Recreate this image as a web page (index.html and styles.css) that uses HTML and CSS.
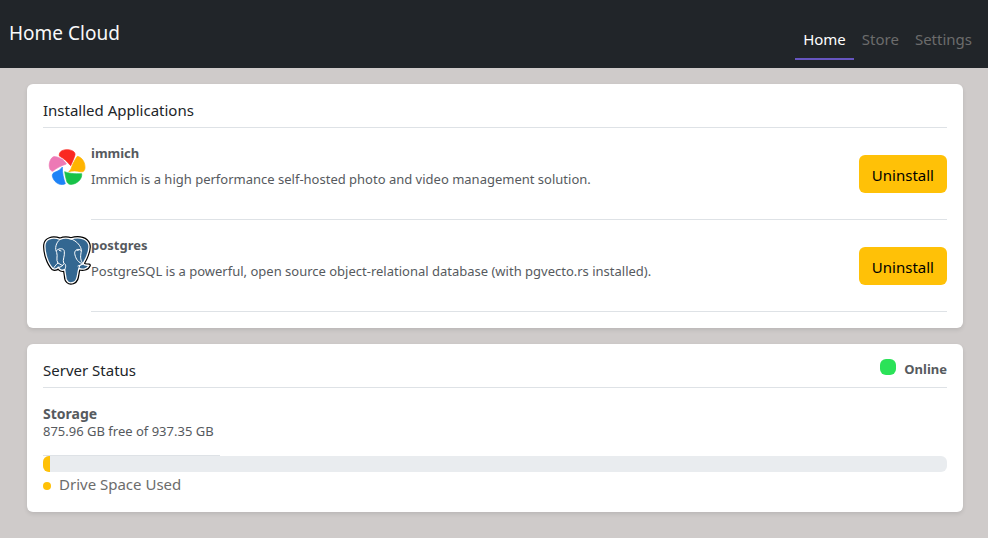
FILE: index.html
```html
<!DOCTYPE html>
<html lang="en">
<head>
<meta charset="utf-8">
<title>Home Cloud</title>
<link rel="stylesheet" href="styles.css">
</head>
<body>
<header class="topbar">
  <a class="brand" href="#">Home Cloud</a>
  <nav class="nav">
    <a class="nav-link active" href="#" aria-current="page">Home</a>
    <a class="nav-link" href="#">Store</a>
    <a class="nav-link" href="#">Settings</a>
  </nav>
</header>
<main class="content">
  <section class="card">
    <div class="card-head"><h2 class="card-title">Installed Applications</h2></div>
    <article class="app">
      <svg class="app-icon" viewBox="0 0 144 144" aria-hidden="true">
        <g stroke-width="2" stroke-linejoin="round">
          <path fill="#fa2921" stroke="#fa2921" d="M83 65C74 54 62 43 49 36C47 23 58 17 72 17C87 17 98 24 96 33C93 44 88 54 83 65Z"/>
          <path fill="#ffb400" stroke="#ffb400" d="M86 69C90 57 97 46 103 37C118 40 127 56 126 72C125 82 119 85 111 83C100 80 89 80 77 83C83 79 84 75 86 69Z"/>
          <path fill="#18c249" stroke="#18c249" d="M65 83C76 88 94 90 116 89C118 103 106 116 92 120C81 123 73 120 71 111C68 101 66 92 65 83Z"/>
          <path fill="#1e83f7" stroke="#1e83f7" d="M58 69C58 86 61 103 67 119C55 125 41 120 33 108C26 97 26 89 35 85C45 81 53 77 58 69Z"/>
          <path fill="#ed79b5" stroke="#ed79b5" d="M37 38C52 40 65 49 70 60C54 65 41 72 29 82C19 80 16 64 21 51C25 42 29 37 37 38Z"/>
        </g>
      </svg>
      <div class="app-body">
        <div class="app-text">
          <h3 class="app-name">immich</h3>
          <p class="app-desc">Immich is a high performance self-hosted photo and video management solution.</p>
        </div>
        <button class="btn" type="button">Uninstall</button>
      </div>
    </article>
    <article class="app">
      <svg class="app-icon" viewBox="0 0 144 144" aria-hidden="true">
        <g stroke-linejoin="round" stroke-linecap="round">
          <g class="pg-outline">
            <path d="M30 98C14 82 4 48 6 26C8 9 27 2 51 10C63 5 75 6 84 9C109 1 132 8 137 25C141 40 131 64 120 83C125 90 133 87 138 88C134 99 119 102 108 97C102 111 106 136 91 139C77 144 68 135 68 121L65 101C57 105 48 101 47 94C41 99 36 101 30 98Z"/>
          </g>
          <path fill="#336791" stroke="#fff" stroke-width="4" d="M30 98C14 82 4 48 6 26C8 9 27 2 51 10C63 5 75 6 84 9C109 1 132 8 137 25C141 40 131 64 120 83C125 90 133 87 138 88C134 99 119 102 108 97C102 111 106 136 91 139C77 144 68 135 68 121L65 101C57 105 48 101 47 94C41 99 36 101 30 98Z"/>
          <g fill="none" stroke="#fff" stroke-width="3">
            <path d="M51 10C38 20 35 39 41 49C45 61 38 72 45 81C38 86 35 93 30 98"/>
            <path d="M41 43C50 35 63 37 64 46C66 61 58 71 62 81C69 84 70 93 65 101"/>
            <path d="M45 81L57 88M45 94C52 95 61 89 62 84"/>
            <path d="M84 9C101 14 116 32 115 45C113 58 110 69 119 82C112 86 107 92 108 97"/>
            <path d="M114 43C104 36 95 42 95 52C97 64 102 77 115 82M119 85L105 90"/>
            <path d="M49 43L54 45M102 43L107 42"/>
          </g>
        </g>
      </svg>
      <div class="app-body">
        <div class="app-text">
          <h3 class="app-name">postgres</h3>
          <p class="app-desc">PostgreSQL is a powerful, open source object-relational database (with pgvecto.rs installed).</p>
        </div>
        <button class="btn" type="button">Uninstall</button>
      </div>
    </article>
  </section>

  <section class="card">
    <div class="card-head">
      <h2 class="card-title">Server Status</h2>
      <div class="status"><span class="status-light"></span>Online</div>
    </div>
    <div class="storage">
      <h3 class="storage-title">Storage</h3>
      <p class="storage-text">875.96 GB free of 937.35 GB</p>
    </div>
    <div class="bar"><div class="bar-used"></div></div>
    <div class="legend"><span class="legend-dot"></span>Drive Space Used</div>
  </section>
</main>
</body>
</html>
```
FILE: styles.css
```css
* { box-sizing: border-box; }

body {
  margin: 0;
  background: #cfcbca;
  color: #212529;
  font-family: "Noto Sans", "Open Sans", sans-serif;
  font-size: 15px;
  line-height: 24px;
}

h2, h3, p { margin: 0; font-weight: 400; }
a { text-decoration: none; }

.topbar {
  display: flex;
  justify-content: space-between;
  align-items: flex-end;
  padding: 16px 8px 8px 9px;
  background: #212529;
}

.brand {
  align-self: flex-start;
  color: #f8f9fa;
  font-size: 19px;
  line-height: 34px;
}

.nav {
  display: flex;
  padding-top: 4px;
}

.nav-link {
  padding: 7px 8px;
  border-bottom: 2px solid transparent;
  color: #6c6c6c;
}

.nav-link.active {
  border-color: #6655c0;
  color: #fff;
}

.content {
  display: flex;
  flex-direction: column;
  gap: 16px;
  padding: 16px 25px 26px 27px;
}

.card {
  padding: 0 16px 16px;
  border-radius: 6px;
  background: #fff;
  box-shadow: 0 2px 4px rgba(0, 0, 0, 0.1);
}

.card-head {
  display: flex;
  justify-content: space-between;
  align-items: flex-start;
  padding: 14px 0 5px;
  border-bottom: 1px solid #dee2e6;
}

.card-title { font-size: 15px; line-height: 24px; }

.app {
  display: flex;
  padding-top: 16px;
}

.app-icon {
  flex: none;
  width: 48px;
  height: 48px;
  overflow: visible;
}

.pg-outline { fill: #000; stroke: #000; stroke-width: 11; }

.app-body {
  display: flex;
  flex: 1;
  justify-content: space-between;
  align-items: flex-start;
  padding-bottom: 26px;
  border-bottom: 1px solid #dee2e6;
}

.app-text { color: #565a5e; font-size: 13px; }
.app-name { font-size: 13px; font-weight: 700; line-height: 18px; }
.app-desc { margin-top: 7px; line-height: 20px; }

.btn {
  margin-top: 11px;
  padding: 8px 13px 6px;
  border: 0;
  border-radius: 6px;
  background: #ffc107;
  color: #000;
  font: inherit;
}

.status {
  display: flex;
  align-items: center;
  gap: 8px;
  color: #565a5e;
  font-size: 13px;
  font-weight: 700;
  line-height: 22px;
}

.status-light {
  width: 16px;
  height: 16px;
  margin-bottom: 4px;
  border-radius: 6px;
  background: #2be258;
}

.storage {
  width: fit-content;
  padding: 17px 6px 15px 0;
  border-bottom: 1px solid #dee2e6;
  color: #565a5e;
  font-size: 13px;
  line-height: 17px;
}

.storage-title { font-size: 14px; font-weight: 700; line-height: 18px; }

.bar {
  height: 16px;
  border-radius: 6px;
  background: #e9ecef;
  overflow: hidden;
}

.bar-used {
  width: 7px;
  height: 100%;
  background: #ffc107;
}

.legend {
  display: flex;
  align-items: center;
  gap: 8px;
  color: #6c6c6c;
}

.legend-dot {
  width: 8px;
  height: 8px;
  margin-top: 4px;
  border-radius: 50%;
  background: #ffc107;
}
```
